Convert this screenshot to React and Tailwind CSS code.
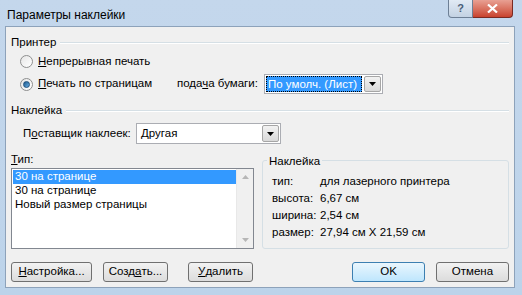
import React from "react";

const font = { fontFamily: '"Liberation Sans", Arial, sans-serif' };

function Radio({ checked }) {
  return (
    <span className="w-[13px] h-[13px] rounded-full border border-[#8e8f8f] bg-gradient-to-br from-[#e6e6e6] to-[#ffffff] flex items-center justify-center shrink-0">
      {checked && (
        <span className="w-[7px] h-[7px] rounded-full bg-gradient-to-br from-[#1c5a8c] to-[#6ab0e6] border border-[#1d4f7c]" />
      )}
    </span>
  );
}

function Arrow() {
  return (
    <svg width="7" height="4" viewBox="0 0 7 4">
      <path d="M0 0h7L3.5 4z" fill="#000" />
    </svg>
  );
}

function DropBtn() {
  return (
    <span className="w-[17px] h-full border border-[#a6a6a6] rounded-[2px] bg-gradient-to-b from-[#f2f2f2] to-[#d9d9d9] flex items-center justify-center">
      <Arrow />
    </span>
  );
}

function Btn({ children, w, primary }) {
  return (
    <button
      className={`h-[20px] ${w} rounded-[3px] border ${
        primary ? "border-[#3c7fb1] from-[#eaf6fd] to-[#bee6fd]" : "border-[#707070] from-[#f2f2f2] to-[#dcdcdc]"
      } bg-gradient-to-b text-[11.5px] text-black flex items-center justify-center leading-none whitespace-nowrap`}
    >
      {children}
    </button>
  );
}

function SectionLabel({ children }) {
  return (
    <div className="flex items-center h-[15px]">
      <span>{children}</span>
      <span className="flex-1 ml-[4px] h-[2px] border-t border-[#d5dfe5] border-b-white border-b" />
    </div>
  );
}

export default function App() {
  return (
    <div
      className="w-[522px] h-[295px] bg-gradient-to-b from-[#c4d7ec] to-[#bcd3ea] flex flex-col text-[11.5px] text-black overflow-hidden whitespace-nowrap"
      style={font}
    >
      {/* title bar */}
      <div className="h-[26px] flex items-start justify-between">
        <span className="pl-[7px] pt-[6px] text-[12px]">Параметры наклейки</span>
        <div className="flex mr-[9px]">
          <span className="w-[25px] h-[18px] border border-[#6d7f95] border-t-0 rounded-bl-[4px] bg-gradient-to-b from-[#e1eaf4] to-[#c3d2e3] flex items-center justify-center text-[11px] font-bold text-[#4a5e78]">
            ?
          </span>
          <span className="w-[40px] h-[18px] border border-[#7a2a22] border-t-0 border-l-0 rounded-br-[4px] bg-gradient-to-b from-[#e8a093] to-[#c8412d] flex items-center justify-center">
            <svg width="11" height="9" viewBox="0 0 11 9">
              <path d="M1 0.5l9 8M10 0.5l-9 8" stroke="#fff" strokeWidth="2.2" />
            </svg>
          </span>
        </div>
      </div>

      {/* client */}
      <div className="ml-[5px] mr-[7px] h-[262px] bg-[#f0f0f0] border border-[#8da2ba] pl-[5px] pr-[5px] flex flex-col">
        <div className="mt-[8px]">
          <SectionLabel>Принтер</SectionLabel>
        </div>
        <div className="flex items-center h-[15px] mt-[4px] pl-[9px]">
          <Radio />
          <span className="ml-[5px]">
            <u>Н</u>епрерывная печать
          </span>
        </div>
        <div className="flex items-center h-[20px] mt-[5px] pl-[9px]">
          <Radio checked />
          <span className="ml-[5px] w-[139px]">
            <u>П</u>ечать по страницам
          </span>
          <span className="w-[87px]">
            пода<u>ч</u>а бумаги:
          </span>
          <div className="w-[119px] h-[20px] border border-[#abadb3] bg-white flex items-center p-[1px]">
            <span className="flex-1 h-full bg-[#3399ff] text-white border border-dotted border-[#000] leading-[15px] pl-[1px]">
              По умолч. (Лист)
            </span>
            <span className="ml-[2px] h-full">
              <DropBtn />
            </span>
          </div>
        </div>
        <div className="mt-[9px]">
          <SectionLabel>Наклейка</SectionLabel>
        </div>
        <div className="flex items-center h-[21px] mt-[5px] pl-[12px]">
          <span className="w-[113px]">
            П<u>о</u>ставщик наклеек:
          </span>
          <div className="w-[145px] h-[21px] border border-[#abadb3] bg-white flex items-center p-[1px]">
            <span className="flex-1 pl-[3px]">Другая</span>
            <span className="h-full">
              <DropBtn />
            </span>
          </div>
        </div>
        <div className="flex mt-[8px] gap-[8px]">
          <div className="flex flex-col">
            <span className="h-[15px] leading-[15px]">
              <u>Т</u>ип:
            </span>
            <div className="mt-[1px] w-[243px] h-[81px] border border-[#828790] bg-white flex">
              <div className="flex-1 flex flex-col pt-[1px] pl-[1px] leading-[13.5px]">
                <span className="bg-[#3399ff] text-white pl-[2px] h-[14px]">30 на странице</span>
                <span className="pl-[2px]">30 на странице</span>
                <span className="pl-[2px]">Новый размер страницы</span>
              </div>
              <div className="w-[17px] bg-[#f0f0f0] border-l border-[#e8e8e8] flex flex-col justify-between items-center py-[6px]">
                <svg width="7" height="4" viewBox="0 0 7 4">
                  <path d="M0 4L3.5 0L7 4z" fill="#b6b6b6" />
                </svg>
                <svg width="7" height="4" viewBox="0 0 7 4">
                  <path d="M0 0h7L3.5 4z" fill="#b6b6b6" />
                </svg>
              </div>
            </div>
          </div>
          <div className="relative mt-[8px] w-[248px] h-[89px] border border-[#d5dfe5] rounded-[3px] pl-[9px] pt-[12px]">
            <span className="absolute -top-[8px] left-[4px] bg-[#f0f0f0] px-[2px]">Наклейка</span>
            <div className="grid grid-cols-[48px_1fr] auto-rows-[17px] items-center">
              <span>тип:</span>
              <span>для лазерного принтера</span>
              <span>высота:</span>
              <span>6,67 см</span>
              <span>ширина:</span>
              <span>2,54 см</span>
              <span>размер:</span>
              <span>27,94 см X 21,59 см</span>
            </div>
          </div>
        </div>
        <div className="flex mt-[13px]">
          <Btn w="w-[81px]">
            <u>Н</u>астройка...
          </Btn>
          <span className="ml-[11px]">
            <Btn w="w-[65px]">
              Созд<u>а</u>ть...
            </Btn>
          </span>
          <span className="ml-[20px]">
            <Btn w="w-[65px]">
              <u>У</u>далить
            </Btn>
          </span>
          <span className="ml-auto">
            <Btn w="w-[73px]" primary>
              OK
            </Btn>
          </span>
          <span className="ml-[11px]">
            <Btn w="w-[73px]">Отмена</Btn>
          </span>
        </div>
      </div>
    </div>
  );
}
